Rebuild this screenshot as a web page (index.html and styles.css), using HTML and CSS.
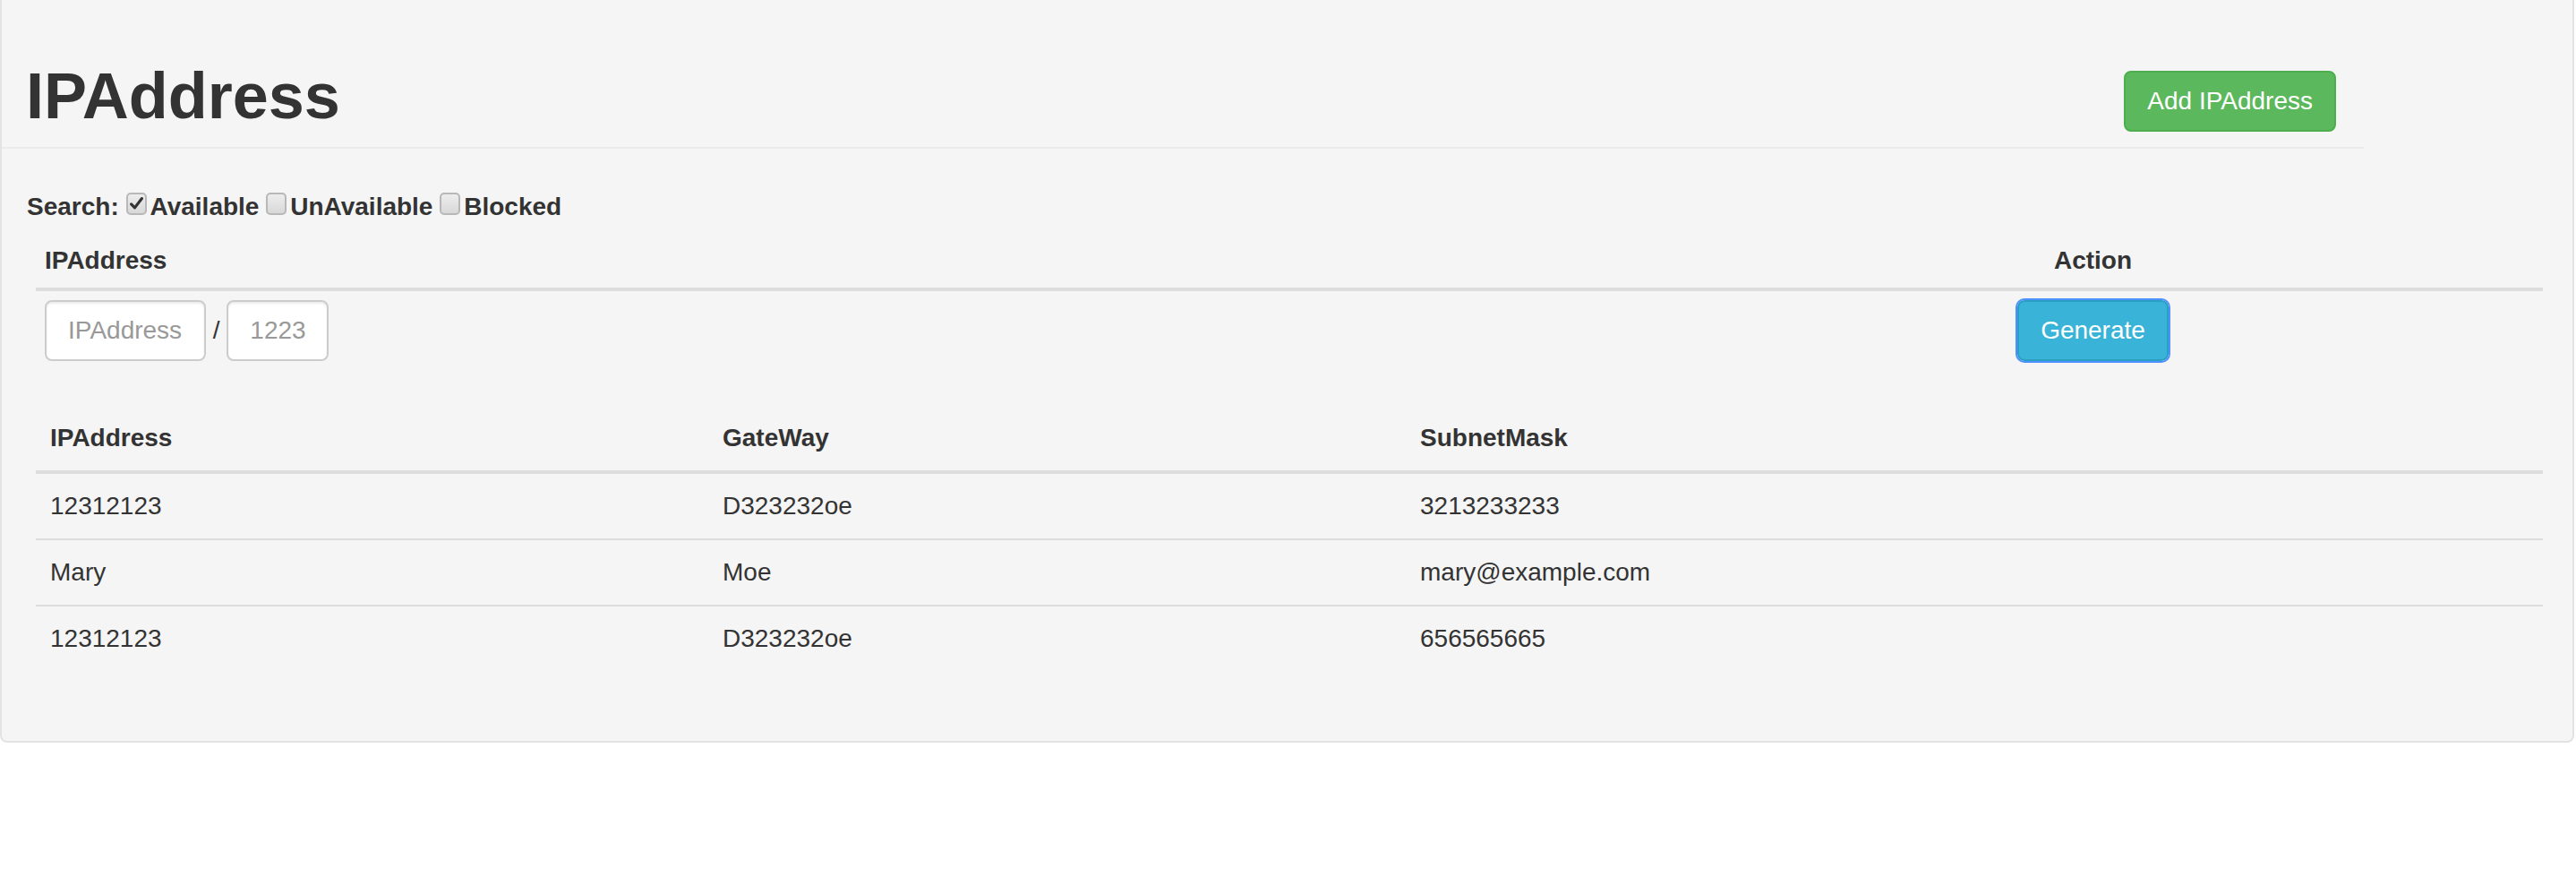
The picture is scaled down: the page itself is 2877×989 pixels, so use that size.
FILE: index.html
```html
<!DOCTYPE html>
<html lang="en">
<head>
<meta charset="utf-8">
<title>IPAddress</title>
<link rel="stylesheet" href="styles.css">
</head>
<body>
<div class="well">
  <div class="page-header">
    <h1 class="title">IPAddress</h1>
    <button class="btn btn-success" type="button">Add IPAddress</button>
  </div>
  <div class="search">
    Search: <label><input type="checkbox" class="check" checked>Available</label> <label><input type="checkbox" class="check">UnAvailable</label> <label><input type="checkbox" class="check">Blocked</label>
  </div>
  <table class="table table-gen">
    <colgroup><col class="gen-c1"><col class="gen-c2"></colgroup>
    <thead>
      <tr><th>IPAddress</th><th class="center">Action</th></tr>
    </thead>
    <tbody>
      <tr>
        <td><input class="form-control ip" type="text" placeholder="IPAddress"> / <input class="form-control mask" type="text" placeholder="1223"></td>
        <td class="center"><button class="btn btn-info focused" type="button">Generate</button></td>
      </tr>
    </tbody>
  </table>
  <table class="table table-list">
    <colgroup><col class="list-c1"><col class="list-c2"><col class="list-c3"></colgroup>
    <thead>
      <tr><th>IPAddress</th><th>GateWay</th><th>SubnetMask</th></tr>
    </thead>
    <tbody>
      <tr><td>12312123</td><td>D323232oe</td><td>3213233233</td></tr>
      <tr><td>Mary</td><td>Moe</td><td>mary@example.com</td></tr>
      <tr><td>12312123</td><td>D323232oe</td><td>656565665</td></tr>
    </tbody>
  </table>
</div>
</body>
</html>
```
FILE: styles.css
```css
html, body {
  margin: 0;
  padding: 0;
  background: #ffffff;
}
body {
  font-family: "Liberation Sans", Arial, Helvetica, sans-serif;
  font-size: 28px;
  line-height: 40px;
  color: #333333;
}
.well {
  margin: 0 2px 0 0;
  background: #f5f5f5;
  border: 2px solid #e3e3e3;
  border-top: 0;
  border-radius: 0 0 8px 8px;
  padding: 0 0 38px 0;
}
.page-header {
  width: 2638px;
  box-sizing: border-box;
  padding: 67px 31px 17px 27px;
  border-bottom: 2px solid #ebebeb;
  display: flex;
  justify-content: space-between;
  align-items: flex-end;
}
.title {
  margin: 0;
  font-size: 72px;
  line-height: 80px;
  font-weight: bold;
  color: #333333;
}
.btn {
  font-family: inherit;
  font-size: 28px;
  line-height: 40px;
  height: 68px;
  box-sizing: border-box;
  padding: 12px 24px;
  border: 2px solid transparent;
  border-radius: 8px;
  color: #ffffff;
  cursor: pointer;
  white-space: nowrap;
}
.btn-success {
  background: #5cb85c;
  border-color: #4cae4c;
}
.btn-info {
  background: #39b3d7;
  border-color: #2a9fc4;
}
.btn-info.focused {
  outline: 2px solid #4d90fe;
  outline-offset: 0;
}
.search {
  margin-top: 45px;
  padding-left: 28px;
  font-weight: bold;
  height: 40px;
}
.search label {
  font-weight: bold;
}
.check {
  -webkit-appearance: none;
  appearance: none;
  width: 23px;
  height: 25px;
  margin: 0 4px 0 0;
  box-sizing: border-box;
  border: 2px solid #b8b8b8;
  border-radius: 5px;
  background-color: #e2e2e2;
  background-image: linear-gradient(#ededed, #d8d8d8);
  vertical-align: baseline;
}
.check:checked {
  background-image: url("data:image/svg+xml;utf8,<svg xmlns='http://www.w3.org/2000/svg' viewBox='0 0 24 24'><path d='M4.5 12.5 L9.5 17.5 L19.5 4.5' fill='none' stroke='%23333333' stroke-width='4' stroke-linecap='round' stroke-linejoin='round'/></svg>"), linear-gradient(#ededed, #d8d8d8);
  background-size: 100% 100%, 100% 100%;
  background-repeat: no-repeat;
}
.table {
  border-collapse: collapse;
  border-spacing: 0;
  table-layout: fixed;
  width: 2800px;
  margin: 0 0 40px 38px;
}
.table th {
  text-align: left;
  font-weight: bold;
  border-bottom: 4px solid #dddddd;
  vertical-align: bottom;
}
.table td {
  border-top: 2px solid #dddddd;
  vertical-align: top;
}
.table .center {
  text-align: center;
}
.table-gen {
  margin-top: 10px;
}
.table-gen th,
.table-gen td {
  padding: 10px;
}
.gen-c1 { width: 1795px; }
.gen-c2 { width: 1005px; }
.table-list th,
.table-list td {
  padding: 16px;
}
.list-c1 { width: 751px; }
.list-c2 { width: 779px; }
.list-c3 { width: 1270px; }
.form-control {
  font-family: inherit;
  font-size: 28px;
  line-height: 40px;
  height: 68px;
  box-sizing: border-box;
  padding: 12px 20px 12px 24px;
  border: 2px solid #cccccc;
  border-radius: 8px;
  background: #ffffff;
  color: #555555;
  box-shadow: inset 0 2px 2px rgba(0, 0, 0, 0.075);
  vertical-align: baseline;
  margin: 0;
}
.form-control::placeholder {
  color: #999999;
}
.ip { width: 180px; }
.mask { width: 114px; }
```
